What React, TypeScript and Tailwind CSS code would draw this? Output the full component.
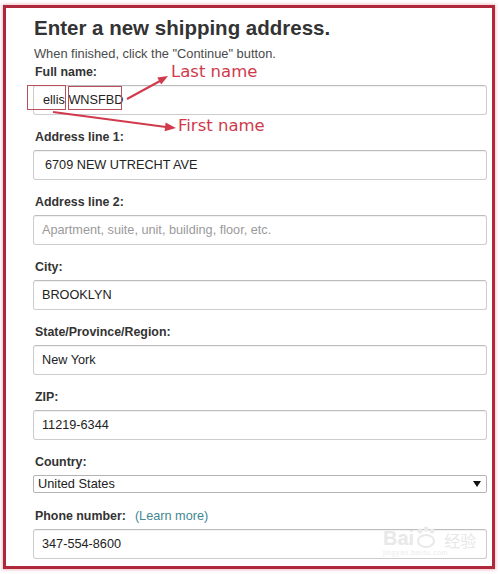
import React from "react";

// ===========================
// Types
// ===========================

interface FieldProps {
  label: React.ReactNode;
  value?: string;
  placeholder?: string;
  inset?: string;
}

// ===========================
// Components
// ===========================

/**
 * Text field with a bold label above it
 */
function Field({ label, value, placeholder, inset = "pl-[8px]" }: FieldProps) {
  return (
    <div className="flex flex-col">
      <label className="pl-[2px] text-[12.4px] leading-[15px] font-bold text-[#333] mb-[5px]">
        {label}
      </label>
      <input
        readOnly
        defaultValue={value}
        placeholder={placeholder}
        className={`h-[30px] w-full rounded-[3px] border border-[#cdcdcd] border-t-[#bdbdbd] bg-white ${inset} pr-2 text-[12.7px] text-[#222] placeholder:text-[#9a9a9a] shadow-[inset_0_1px_1px_rgba(0,0,0,0.06)] outline-none`}
      />
    </div>
  );
}

/**
 * Country dropdown, drawn as a plain box with a small triangle
 */
function CountrySelect() {
  return (
    <div className="flex flex-col">
      <label className="pl-[2px] text-[12.4px] leading-[15px] font-bold text-[#333] mb-[5px]">
        Country:
      </label>
      <div className="h-[18px] w-full flex items-center justify-between rounded-[2px] border border-[#b3b3b3] bg-white pl-[4px] pr-[5px]">
        <span className="text-[12.8px] leading-none text-[#222]">United States</span>
        <svg width="8" height="6" viewBox="0 0 8 6" aria-hidden="true">
          <path d="M0 0H8L4 6Z" fill="#111" />
        </svg>
      </div>
    </div>
  );
}

/**
 * Red callouts drawn over the full name field
 */
function Annotations() {
  return (
    <>
      {/* boxes round the two name parts */}
      <div className="absolute left-[27px] top-[85px] w-[39px] h-[25px] border border-[#b8505b]" />
      <div className="absolute left-[68px] top-[86px] w-[54px] h-[24px] border border-[#b8505b]" />

      <svg
        className="absolute left-0 top-0 pointer-events-none"
        width="500"
        height="574"
        viewBox="0 0 500 574"
        aria-hidden="true"
      >
        {/* to "Last name" */}
        <line x1="127" y1="99" x2="160" y2="81" stroke="#d03a4c" strokeWidth="2" />
        <path d="M168 76L161.2 84.4L157.3 77.4Z" fill="#d03a4c" />
        {/* to "First name" */}
        <line x1="53" y1="112" x2="166" y2="127" stroke="#d03a4c" strokeWidth="2" />
        <path d="M176 128L164.6 131.2L165.6 122.6Z" fill="#d03a4c" />
      </svg>

      <span className="absolute left-[171px] top-[62px] text-[16.5px] leading-[20px] text-[#cf3a4b] font-['DejaVu_Sans',sans-serif]">
        Last name
      </span>
      <span className="absolute left-[178px] top-[116px] text-[16.5px] leading-[20px] text-[#cf3a4b] font-['DejaVu_Sans',sans-serif]">
        First name
      </span>
    </>
  );
}

/**
 * Faint site watermark in the lower right corner
 */
function Watermark() {
  return (
    <div className="absolute left-[383px] top-[526px] flex flex-col items-start text-[#e8e8e8] pointer-events-none">
      <div className="flex items-end leading-none">
        <span className="text-[20px] font-bold font-['Liberation_Sans',sans-serif]">Bai</span>
        <svg width="24" height="22" viewBox="0 0 24 22" aria-hidden="true">
          <circle cx="6" cy="5" r="2.5" fill="#eaeaea" />
          <circle cx="12" cy="3" r="2.5" fill="#eaeaea" />
          <circle cx="18" cy="5" r="2.5" fill="#eaeaea" />
          <ellipse cx="12" cy="15" rx="8" ry="6" fill="none" stroke="#e8e8e8" strokeWidth="2" />
        </svg>
        <span className="ml-[6px] text-[16px] font-['Noto_Sans_CJK_SC',sans-serif]">经验</span>
      </div>
      <span className="text-[7px] leading-[9px] tracking-[0.5px] text-[#ececec] font-['Liberation_Sans',sans-serif]">
        jingyan.baidu.com
      </span>
    </div>
  );
}

/**
 * Main shipping address form
 */
export default function App() {
  return (
    <div className="relative w-[500px] h-[574px] overflow-hidden bg-white pt-[5px] pl-[3px] font-['Liberation_Sans',Arial,sans-serif]">
      <div className="w-[492px] h-[564px] border-[3px] border-[#b0283c] shadow-[0_0_3px_1px_rgba(220,120,130,0.45)] pt-[8px] pl-[27px] pr-[5px]">
        <h1 className="pl-[1px] text-[20.5px] leading-[24px] font-bold text-[#333]">
          Enter a new shipping address.
        </h1>
        <p className="pl-[1px] mt-[6px] text-[12.85px] leading-[15px] text-[#4a4a4a]">
          When finished, click the "Continue" button.
        </p>

        <div className="mt-[4px] flex flex-col gap-[15px]">
          <Field label="Full name:" value="ellis WNSFBD" inset="pl-[9px]" />
          <Field label="Address line 1:" value="6709 NEW UTRECHT AVE" inset="pl-[11px]" />
          <Field
            label="Address line 2:"
            placeholder="Apartment, suite, unit, building, floor, etc."
          />
          <Field label="City:" value="BROOKLYN" />
          <Field label="State/Province/Region:" value="New York" />
          <Field label="ZIP:" value="11219-6344" />
          <CountrySelect />
          <div className="mt-[1px]">
            <Field
              label={
                <>
                  Phone number:
                  <span className="ml-[9px] font-normal text-[12.7px] text-[#3f8793]">
                    (Learn more)
                  </span>
                </>
              }
              value="347-554-8600"
            />
          </div>
        </div>
      </div>

      <Annotations />
      <Watermark />
    </div>
  );
}
